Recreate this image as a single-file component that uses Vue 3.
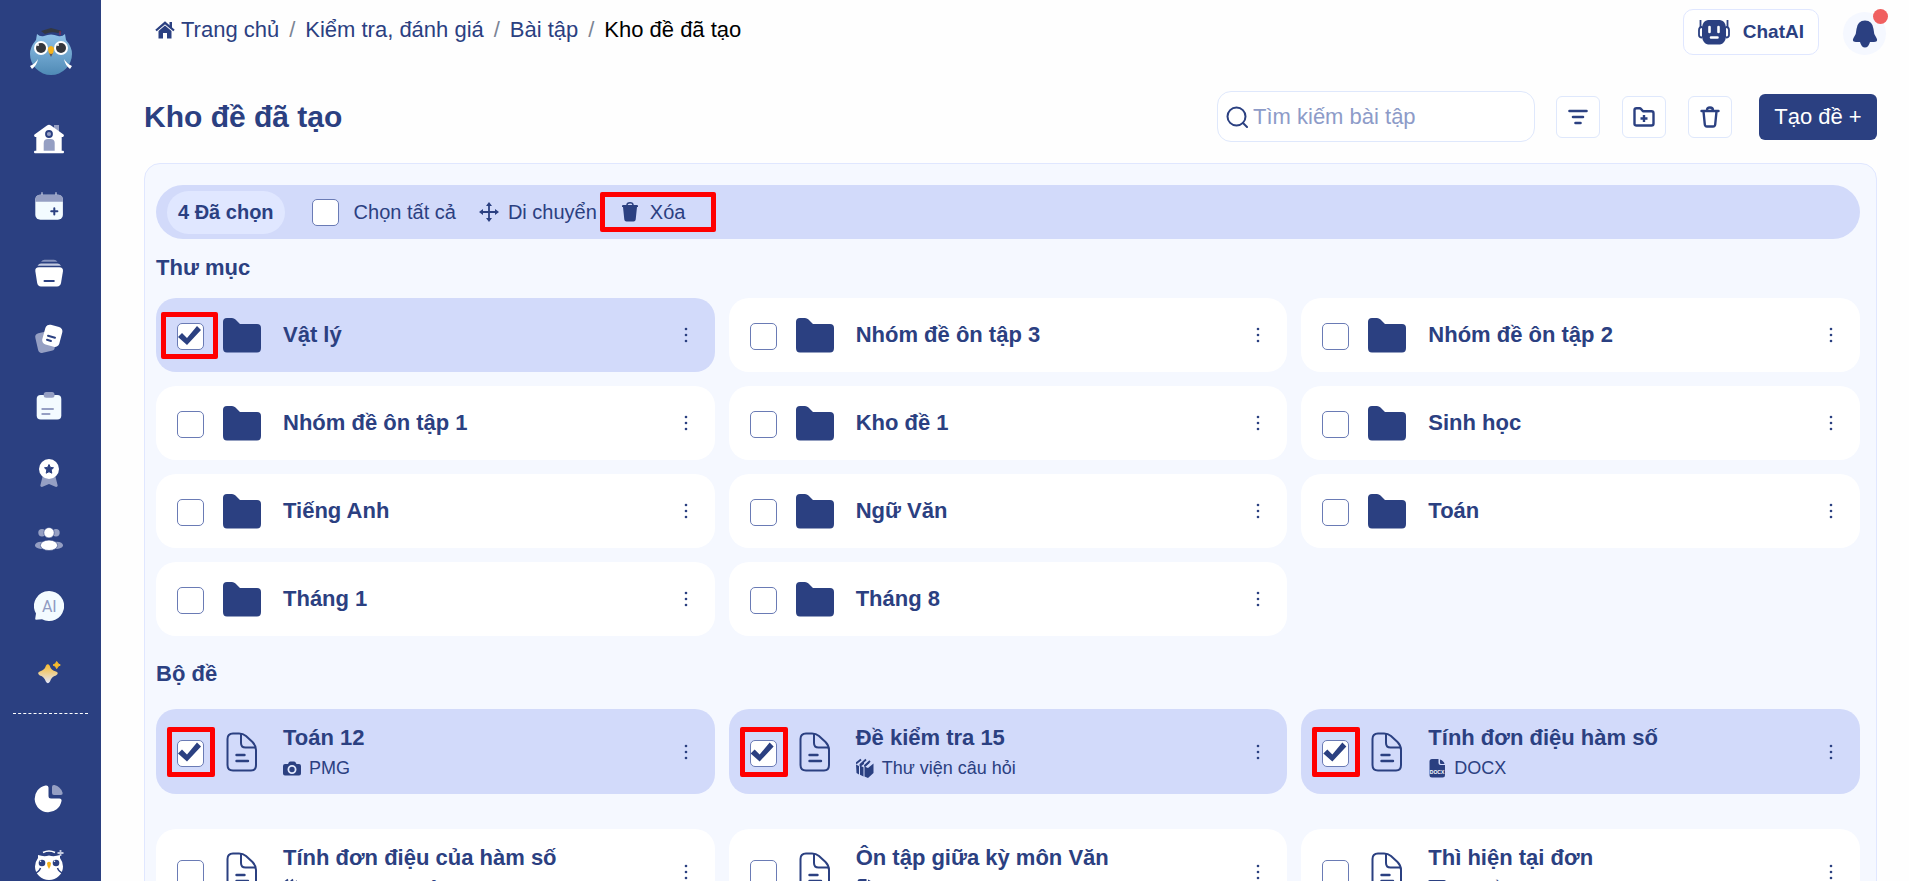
<template>
  <div class="app">
    <aside class="sidebar">
      <a href="#" class="logo" aria-label="Trang chủ">
        <svg width="44" height="48" viewBox="0 0 44 48">
          <defs>
            <linearGradient id="owl" x1="0" y1="0" x2="0" y2="1">
              <stop offset="0" stop-color="#8fc1e8" />
              <stop offset="1" stop-color="#4f8ab5" />
            </linearGradient>
          </defs>
          <path d="M8 6 Q11 9 15 8 Q22 5 29 8 Q33 9 36 6 L37 12 Q43 19 43 26 A21 21 0 0 1 1 26 Q1 19 7 12 Z" fill="url(#owl)" />
          <path d="M12 3 L22 0 L33 3 L29 5 Q22 3 16 6 Z" fill="#333842" />
          <path d="M31 3 V7" stroke="#a52a45" stroke-width="1" />
          <circle cx="12" cy="20" r="7" fill="#fff" />
          <circle cx="32" cy="20" r="7" fill="#fff" />
          <circle cx="12" cy="20" r="5" fill="#35373c" />
          <circle cx="32" cy="20" r="5" fill="#35373c" />
          <circle cx="9" cy="17" r="1" fill="#fff" />
          <circle cx="29" cy="17" r="1" fill="#fff" />
          <path d="M19 20 Q22 16 25 20 Q25 25 22 28 Q19 25 19 20" fill="#f5b31c" />
          <path d="M20 25 Q22 27 24 25 L22 29 Z" fill="#5a5560" />
          <path d="M9 31 Q8 37 3 41 L1 38 Q6 36 9 31 M35 31 Q36 37 41 41 L43 38 Q38 36 35 31" fill="#fff" />
        </svg>
      </a>

      <nav class="menu">
        <a v-for="item in menu" :key="item.icon" href="#" class="menu-item" :aria-label="item.label">
          <svg width="30" height="30" viewBox="0 0 30 30">
            <g v-if="item.icon === 'home'">
              <rect x="20" y="1" width="5" height="9" fill="#959fc3" />
              <path d="M13 1.5 Q15 0 17 1.5 L29.5 10.5 Q30.5 12 29 13 H27.7 V26.7 H29 Q30 26.7 30 28 Q30 29.3 29 29.3 H1 Q0 29.3 0 28 Q0 26.7 1 26.7 H2.3 V13 H1 Q-.5 12 .5 10.5 Z" fill="#fff" />
              <circle cx="15" cy="10" r="3" fill="#959fc3" stroke="#2b4081" stroke-width="1.8" />
              <path d="M9.7 26.7 V19 Q9.7 15 14 15 H16.5 Q20.7 15 20.7 19 V26.7 Z" fill="#959fc3" />
            </g>
            <g v-else-if="item.icon === 'calendar'">
              <path d="M8 1.8 V5 M22 1.8 V5" stroke="#959fc3" stroke-width="1.8" stroke-linecap="round" />
              <rect x="1.3" y="3.7" width="27.6" height="25" rx="5" fill="#f3fbff" />
              <path d="M1.3 10.7 V8.7 Q1.3 3.7 6.3 3.7 H24 Q28.9 3.7 28.9 8.7 V10.7 Z" fill="#959fc3" />
              <path d="M20.3 17.2 V23.4 M17.2 20.3 H23.4" stroke="#2b4081" stroke-width="2" stroke-linecap="round" />
            </g>
            <g v-else-if="item.icon === 'stack'">
              <path d="M7 3.7 Q8.5 1.7 10.5 1.7 H20 Q22 1.7 23.5 3.7 Z" fill="#8793bd" />
              <path d="M3.5 7.7 Q5 5.5 7 5.5 H23.5 Q25.5 5.5 27 7.7 Z" fill="#c3cae0" />
              <path d="M5 9.3 H25.5 Q29 9.3 29 13 L27 25 Q26.3 28.4 23 28.4 H7 Q3.8 28.4 3.2 25 L1.3 13 Q1 9.3 5 9.3" fill="#fff" />
              <path d="M10.5 23 H19.8" stroke="#2b4081" stroke-width="2" stroke-linecap="round" />
            </g>
            <g v-else-if="item.icon === 'cards'">
              <rect x="2.5" y="8" width="17" height="20" rx="4" fill="#959fc3" transform="rotate(-13 11 18)" />
              <rect x="9.5" y="1.5" width="17.5" height="20.5" rx="4.5" fill="#fff" transform="rotate(15 18 12)" />
              <path d="M14 11.8 L21 13.8 M13 15.8 L17 17" stroke="#2b4081" stroke-width="2" stroke-linecap="round" />
            </g>
            <g v-else-if="item.icon === 'clipboard'">
              <rect x="2.7" y="4" width="24.6" height="24.5" rx="4" fill="#f3fbff" />
              <rect x="9.7" y="1" width="10.8" height="5.7" rx="2.5" fill="#959fc3" />
              <path d="M8.3 18 H19 M8.3 23 H15.5" stroke="#959fc3" stroke-width="2" stroke-linecap="round" />
            </g>
            <g v-else-if="item.icon === 'badge'">
              <path d="M9 17 L6.3 27.5 Q6.5 29.3 8.5 28.8 L15 26 L21.5 28.8 Q23.5 29.3 23.7 27.5 L21 17 Z" fill="#959fc3" />
              <circle cx="15" cy="11" r="10" fill="#fff" />
              <path d="M15 6.5 L16.4 9.4 L19.5 9.8 L17.2 12 L17.8 15.2 L15 13.7 L12.2 15.2 L12.8 12 L10.5 9.8 L13.6 9.4 Z" fill="#2b4081" stroke="#2b4081" stroke-linejoin="round" />
            </g>
            <g v-else-if="item.icon === 'people'">
              <circle cx="8" cy="8.7" r="3.7" fill="#959fc3" />
              <circle cx="22" cy="8.7" r="3.7" fill="#959fc3" />
              <ellipse cx="7" cy="21.3" rx="6" ry="3.6" fill="#959fc3" />
              <ellipse cx="23" cy="21.3" rx="6" ry="3.6" fill="#959fc3" />
              <circle cx="15" cy="8.7" r="5.2" fill="#fff" stroke="#2b4081" stroke-width=".6" />
              <ellipse cx="15" cy="21.3" rx="8.6" ry="5.2" fill="#fff" stroke="#2b4081" stroke-width=".6" />
            </g>
            <g v-else-if="item.icon === 'ai'">
              <path d="M15 0 A15 15 0 1 1 8 28.2 Q5 28.2 2 28.8 Q1 28.6 1.3 27 L2 22.5 A15 15 0 0 1 15 0" fill="#f3fbff" />
              <text x="15.3" y="21" text-anchor="middle" class="ai-text">AI</text>
            </g>
            <g v-else-if="item.icon === 'sparkle'">
              <defs>
                <linearGradient id="spark" x1="0" y1="0" x2="0" y2="1">
                  <stop offset="0" stop-color="#f8bb2c" />
                  <stop offset="1" stop-color="#e2e6fb" />
                </linearGradient>
              </defs>
              <path d="M12 7.5 Q13.8 5 15.6 7.5 Q17 12.5 22 13.6 Q25.500 15.3 22 17.4 Q17.5 18.5 16 23.5 Q13.8 27 11.8 23.5 Q10.5 18.7 5.8 17.4 Q2.5 15.3 5.8 13.6 Q10.8 12 12 7.5" fill="url(#spark)" />
              <path d="M22.7 3.5 L24 5.7 L26.3 7 L24 8.3 L22.7 10.6 L21.4 8.3 L19 7 L21.4 5.7 Z" fill="#f8bb2c" stroke="#f8bb2c" stroke-linejoin="round" />
            </g>
          </svg>
        </a>
      </nav>

      <div class="menu-divider"></div>

      <nav class="menu-bottom">
        <a href="#" class="menu-item" aria-label="Thống kê">
          <svg width="30" height="30" viewBox="0 0 30 30">
            <path d="M11.5 2.5 Q14.3 2 14.5 4.5 V13 Q14.5 15.5 17 15.5 H25.5 Q28 15.5 27.5 18 A13.5 13.5 0 1 1 11.5 2.5" fill="#fff" />
            <path d="M18 4 Q18 1.5 20.5 2 Q26.5 3.5 28.5 9.5 Q29 12 26.5 12 H20 Q18 12 18 10 Z" fill="#959fc3" />
          </svg>
        </a>
        <a href="#" class="menu-item" aria-label="Trợ lý">
          <svg width="30" height="30" viewBox="0 0 30 30">
            <path d="M4 5 Q10 7 15 5.5 Q20 7 26 5 L26 8 Q29 12 29 16.5 A14 13.5 0 0 1 1 16.5 Q1 12 4 8 Z" fill="#fff" />
            <path d="M9 2.5 Q15 -.5 21 2.5" stroke="#fff" stroke-width="1.6" fill="none" />
            <circle cx="8" cy="13" r="3.3" fill="#2b4081" />
            <circle cx="22" cy="13" r="3.3" fill="#2b4081" />
            <circle cx="6.5" cy="11.3" r=".8" fill="#fff" />
            <circle cx="20.5" cy="11.3" r=".8" fill="#fff" />
            <path d="M13 13 Q15 10.5 17 13 Q17 16.5 15 19 Q13 16.5 13 13" fill="#f5b31c" />
            <path d="M1 23 Q5 22 6.5 18 M29 23 Q25 22 23.5 18" stroke="#2b4081" stroke-width="1.5" fill="none" />
            <path d="M26.5 0 V6 M23.5 3 H29.5" stroke="#c3cae0" stroke-width="1.8" />
          </svg>
        </a>
      </nav>
    </aside>

    <main class="main">
      <div class="topbar">
        <nav class="breadcrumb" aria-label="Breadcrumb">
          <a href="#" class="crumb-home">
            <svg width="20" height="18" viewBox="0 0 20 18">
              <path d="M1 9.5 L10 1.8 L19 9.5" fill="none" stroke="#2b4081" stroke-width="2.2" />
              <path d="M14.5 1 H17 V7.5 L14.5 5.3 Z M3.5 10 L10 4.6 L16.5 10 V17.5 H12 V12 H8 V17.5 H3.5 Z" fill="#2b4081" />
            </svg>
            Trang chủ</a>
          <span class="slash">/</span>
          <a href="#">Kiểm tra, đánh giá</a>
          <span class="slash">/</span>
          <a href="#">Bài tập</a>
          <span class="slash">/</span>
          <span class="current">Kho đề đã tạo</span>
        </nav>
        <div class="topbar-actions">
          <button type="button" class="chat-btn">
            <svg width="32" height="26" viewBox="0 0 32 26">
              <path d="M10 1 H22 Q27 1.5 28 8 V18 Q27 24.5 22 25.5 H10 Q5 24.5 4 18 V8 Q5 1.5 10 1" fill="#2b4081" />
              <path d="M2.5 1 V9 M29.5 1 V9" stroke="#2b4081" stroke-width="1.8" />
              <path d="M4 8 Q1 8 1 11 V16 Q1 18.5 4 18.5 M28 8 Q31 8 31 11 V16 Q31 18.5 28 18.5" stroke="#2b4081" stroke-width="1.8" fill="none" />
              <path d="M11.5 8 V13 M20.5 8 V13 M13 18.5 H19.5" stroke="#fff" stroke-width="2.6" stroke-linecap="round" />
            </svg>
            ChatAI
          </button>
          <button type="button" class="bell-btn" aria-label="Thông báo">
            <svg width="26" height="28" viewBox="0 0 26 28">
              <path d="M13 .5 Q20.5 .5 21.5 9 Q21.5 14 24.5 18 Q26.5 22 22 22 H18 Q16.5 27.5 13 27.5 Q9.5 27.5 8 22 H4 Q-.5 22 1.5 18 Q4.5 14 4.5 9 Q5.5 .5 13 .5" fill="#2b4081" />
            </svg>
            <span class="bell-dot"></span>
          </button>
        </div>
      </div>

      <header class="page-header">
        <h1>Kho đề đã tạo</h1>
        <label class="search">
          <svg width="22" height="22" viewBox="0 0 22 22">
            <circle cx="10.5" cy="10.5" r="9" fill="none" stroke="#2b4081" stroke-width="2" />
            <path d="M17 17 L21 21" stroke="#2b4081" stroke-width="2" stroke-linecap="round" />
          </svg>
          <input v-model="keyword" type="text" placeholder="Tìm kiếm bài tập" aria-label="Tìm kiếm bài tập">
        </label>
        <div class="tools">
          <button type="button" class="tool-btn" aria-label="Bộ lọc">
            <svg width="20" height="16" viewBox="0 0 20 16" fill="none" stroke="#2b4081" stroke-width="2.6" stroke-linecap="round">
              <path d="M1.500 2 H18.500 M5 8 H15 M7.5 14 H12.5" />
            </svg>
          </button>
          <button type="button" class="tool-btn" aria-label="Thêm thư mục">
            <svg width="22" height="20" viewBox="0 0 22 20" fill="none" stroke="#2b4081" stroke-width="2.4" stroke-linejoin="round">
              <path d="M1.5 17 V3 Q1.5 1.2 3.5 1.2 H6.5 Q7.5 1.2 8.3 2.2 L10 4.3 H18.5 Q20.5 4.3 20.5 6.3 V16.5 Q20.5 18.5 18.5 18.5 H3.5 Q1.5 18.5 1.5 17" />
              <path d="M11 8 V15 M7.5 11.5 H14.5" />
            </svg>
          </button>
          <button type="button" class="tool-btn" aria-label="Thùng rác">
            <svg width="20" height="22" viewBox="0 0 20 22" fill="none" stroke="#2b4081" stroke-width="2.4" stroke-linecap="round" stroke-linejoin="round">
              <path d="M1.5 5 H18.5 M7 4.5 Q7 1.5 10 1.5 Q13 1.5 13 4.5 M3.5 5.5 L4.8 18.5 Q5 20.5 7 20.5 H13 Q15 20.5 15.2 18.5 L16.5 5.5" />
            </svg>
          </button>
        </div>
        <button type="button" class="create-btn">Tạo đề +</button>
      </header>

      <section class="panel">
        <div class="bulk-bar">
          <span class="bulk-count">{{ selectedCount }} Đã chọn</span>
          <label class="select-all">
            <input v-model="allSelected" type="checkbox" class="checkbox">
            Chọn tất cả
          </label>
          <button type="button" class="bulk-btn">
            <svg width="20" height="20" viewBox="0 0 20 20">
              <path d="M10 3 V17 M3 10 H17" stroke="#2b4081" stroke-width="1.8" />
              <path d="M10 0 L13 4 H7 Z M10 20 L13 16 H7 Z M0 10 L4 7 V13 Z M20 10 L16 7 V13 Z" fill="#2b4081" />
            </svg>
            Di chuyển
          </button>
          <button type="button" class="bulk-btn delete">
            <svg width="16" height="20" viewBox="0 0 16 20">
              <path d="M5 3 Q5 .8 8 .8 Q11 .8 11 3" fill="none" stroke="#2b4081" stroke-width="1.5" />
              <path d="M1 3 H15 Q16 3 16 4.2 V5 H15 L13.7 17.5 Q13.5 19.5 11.5 19.5 H4.5 Q2.5 19.5 2.3 17.5 L1 5 H0 V4.2 Q0 3 1 3" fill="#2b4081" />
            </svg>
            Xóa
          </button>
        </div>

        <h2>Thư mục</h2>
        <div class="grid folders">
          <article v-for="folder in folders" :key="folder.name" class="card folder-card" :class="{ selected: folder.checked }">
            <label class="check">
              <input v-model="folder.checked" type="checkbox" class="checkbox" :aria-label="folder.name">
            </label>
            <svg class="folder-icon" width="40" height="36" viewBox="0 0 40 36">
              <path d="M1 5 Q1 1 5 1 H10 Q12 1 13.5 2.5 L18 7 H35 Q39 7 39 11 V31 Q39 35.5 35 35.5 H5 Q1 35.5 1 31 Z" fill="#2b4081" />
            </svg>
            <h3>{{ folder.name }}</h3>
            <button type="button" class="more" aria-label="Tùy chọn">
              <svg width="4" height="16" viewBox="0 0 4 16" fill="#2b4081">
                <circle cx="2" cy="2" r="1.3" /><circle cx="2" cy="8" r="1.3" /><circle cx="2" cy="14" r="1.3" />
              </svg>
            </button>
          </article>
        </div>

        <h2 class="sets-title">Bộ đề</h2>
        <div class="grid sets">
          <article v-for="set in sets" :key="set.name" class="card set-card" :class="{ selected: set.checked }">
            <label class="check">
              <input v-model="set.checked" type="checkbox" class="checkbox" :aria-label="set.name">
            </label>
            <svg class="doc-icon" width="32" height="40" viewBox="0 0 32 40" fill="none" stroke="#2b4081" stroke-width="2" stroke-linecap="round">
              <path d="M7 1.5 H13 Q17 1.5 20 4 L26.5 10 Q30 13.5 30 18 V33 Q30 38.5 25 38.5 H7 Q1.5 38.5 1.5 33 V7 Q1.5 1.5 7 1.5" />
              <path d="M15 2 V11 Q15 15.5 19.5 15.5 H29" />
              <path d="M10.5 23 H18.5 M10.5 29 H22" stroke-width="2.4" />
            </svg>
            <div class="set-info">
              <h3>{{ set.name }}</h3>
              <p>
                <svg v-if="set.type === 'image'" width="18" height="18" viewBox="0 0 18 18">
                  <path d="M2 5 H5 L6 3 Q6.5 2.5 7.5 2.5 H11 Q12 2.5 12.3 3 L13.5 5 H16 Q18 5 18 7 V14.5 Q18 16.5 16 16.5 H2 Q0 16.5 0 14.5 V7 Q0 5 2 5" fill="#2b4081" />
                  <circle cx="9" cy="10.5" r="3.6" fill="#2b4081" stroke="#e3e9fd" stroke-width="1.8" />
                </svg>
                <svg v-else-if="set.type === 'library'" width="18" height="20" viewBox="0 0 18 20">
                  <path d="M0 5.5 L5 1.5 M4 7 L10 1.5 M8.5 8 L14 3" stroke="#2b4081" stroke-width="1.8" />
                  <path d="M0 6.500 L3 8 V16.500 L.5 15 Z M4 7.500 L7.500 9.200 V18.500 L4 16.800 Z M8.500 8.500 L12 10 L17.500 5.500 V15 L12 20 L8.500 18.500 Z" fill="#2b4081" />
                  <path d="M3.500 7 L8 3.500 V6 L4 9 Z M8 8 L12.500 4 L13.500 5 L9 9 Z" fill="#2b4081" />
                </svg>
                <svg v-else-if="set.type === 'docx'" width="18" height="20" viewBox="0 0 18 20">
                  <path d="M4 1 H10.5 V5 Q10.5 7 12.5 7 H17 V17 Q17 19.5 14.5 19.5 H4 Q1.5 19.5 1.5 17 V3.5 Q1.5 1 4 1 M12 1.5 Q16 3 16.5 6 H13 Q12 6 12 5 Z" fill="#2b4081" />
                  <text x="9" y="16" text-anchor="middle" class="docx-text">DOCX</text>
                </svg>
                <svg v-else width="18" height="18" viewBox="0 0 18 18">
                  <rect x="0" y="1" width="18" height="15" rx="2" fill="#2b4081" />
                  <path d="M4 6 H14 M4 10 H11" stroke="#fff" stroke-width="1.5" />
                </svg>
                {{ set.source }}
              </p>
            </div>
            <button type="button" class="more" aria-label="Tùy chọn">
              <svg width="4" height="16" viewBox="0 0 4 16" fill="#2b4081">
                <circle cx="2" cy="2" r="1.3" /><circle cx="2" cy="8" r="1.3" /><circle cx="2" cy="14" r="1.3" />
              </svg>
            </button>
          </article>
        </div>
      </section>
    </main>
  </div>
</template>

<script setup>
import { ref, computed } from 'vue'

const keyword = ref('')
const allSelected = ref(false)

const menu = [
  { icon: 'home', label: 'Trang chủ' },
  { icon: 'calendar', label: 'Lịch' },
  { icon: 'stack', label: 'Kho học liệu' },
  { icon: 'cards', label: 'Thẻ ghi nhớ' },
  { icon: 'clipboard', label: 'Bài tập' },
  { icon: 'badge', label: 'Thành tích' },
  { icon: 'people', label: 'Lớp học' },
  { icon: 'ai', label: 'ChatAI' },
  { icon: 'sparkle', label: 'Nâng cấp' }
]

const folders = ref([
  { name: 'Vật lý', checked: true },
  { name: 'Nhóm đề ôn tập 3', checked: false },
  { name: 'Nhóm đề ôn tập 2', checked: false },
  { name: 'Nhóm đề ôn tập 1', checked: false },
  { name: 'Kho đề 1', checked: false },
  { name: 'Sinh học', checked: false },
  { name: 'Tiếng Anh', checked: false },
  { name: 'Ngữ Văn', checked: false },
  { name: 'Toán', checked: false },
  { name: 'Tháng 1', checked: false },
  { name: 'Tháng 8', checked: false }
])

const sets = ref([
  { name: 'Toán 12', type: 'image', source: 'PMG', checked: true },
  { name: 'Đề kiểm tra 15', type: 'library', source: 'Thư viện câu hỏi', checked: true },
  { name: 'Tính đơn điệu hàm số', type: 'docx', source: 'DOCX', checked: true },
  { name: 'Tính đơn điệu của hàm số', type: 'library', source: 'Thư viện câu hỏi', checked: false },
  { name: 'Ôn tập giữa kỳ môn Văn', type: 'docx', source: 'DOCX', checked: false },
  { name: 'Thì hiện tại đơn', type: 'topic', source: 'Bài đề', checked: false }
])

const selectedCount = computed(() => {
  return [...folders.value, ...sets.value].filter((item) => item.checked).length
})
</script>

<style>
body {
  margin: 0;
  background: #fefefe;
}
</style>

<style scoped>
.app {
  display: flex;
  height: 100vh;
  overflow: hidden;
  font-family: "Liberation Sans", Arial, sans-serif;
  font-size: 22px;
  color: #2b4081;
}

.app *,
.app *::before,
.app *::after {
  box-sizing: border-box;
}

a {
  color: inherit;
  text-decoration: none;
}

svg {
  display: block;
  flex-shrink: 0;
}

button {
  font: inherit;
  color: inherit;
  background: transparent;
  border: none;
  padding: 0;
  cursor: pointer;
}

h1,
h2,
h3,
p {
  margin: 0;
}

/* Sidebar */
.sidebar {
  width: 101px;
  flex-shrink: 0;
  background: #2b4081;
  display: flex;
  flex-direction: column;
  overflow: hidden;
}

.logo {
  display: flex;
  justify-content: center;
  padding: 28px 0 30px;
  flex-shrink: 0;
}

.menu,
.menu-bottom {
  display: flex;
  flex-direction: column;
  flex-shrink: 0;
  padding-right: 3px;
}

.menu {
  height: 600px;
}

.menu-bottom {
  height: 133px;
  margin-top: 51px;
}

.menu-item {
  flex: 1;
  display: flex;
  align-items: center;
  justify-content: center;
}

.menu-divider {
  margin: 7px 13px 0;
  border-top: 1px dashed #fff;
}

.ai-text {
  font-family: Roboto, sans-serif;
  font-size: 16px;
  fill: #8f9ac2;
}

/* Top bar */
.main {
  flex: 1;
  min-width: 0;
  padding: 9px 32px 0 43px;
  overflow: auto;
  scrollbar-width: none;
}

.topbar {
  display: flex;
  justify-content: space-between;
  height: 46px;
}

.breadcrumb {
  display: flex;
  align-items: flex-start;
  padding-left: 11px;
  line-height: 42px;
}

.crumb-home {
  display: flex;
  align-items: center;
  gap: 6px;
}

.slash {
  width: 26px;
  text-align: center;
  color: #7b8494;
}

.current {
  color: #000;
}

.topbar-actions {
  display: flex;
  gap: 24px;
  margin-right: -9px;
}

.chat-btn {
  display: flex;
  align-items: center;
  gap: 13px;
  height: 46px;
  padding: 0 14px;
  background: #fff;
  border: 1px solid #e0e7ff;
  border-radius: 10px;
  font-size: 19px;
  font-weight: 700;
}

.bell-btn {
  position: relative;
  display: flex;
  align-items: center;
  justify-content: center;
  width: 43px;
  height: 43px;
  margin-top: 3px;
  border-radius: 50%;
  background: #f5f8ff;
}

.bell-dot {
  position: absolute;
  top: -3px;
  right: -2px;
  width: 15px;
  height: 15px;
  border-radius: 50%;
  background: #f06060;
}

/* Page header */
.page-header {
  display: flex;
  align-items: center;
  margin-top: 36px;
  margin-bottom: 21px;
}

h1 {
  font-size: 30px;
  line-height: 36px;
}

.search {
  display: flex;
  align-items: center;
  gap: 5px;
  width: 318px;
  height: 51px;
  margin-left: auto;
  padding: 0 8px;
  background: #fff;
  border: 1px solid #dfe8fc;
  border-radius: 14px;
}

.search input {
  flex: 1;
  min-width: 0;
  padding: 0;
  border: none;
  outline: none;
  background: transparent;
  font: inherit;
  color: inherit;
}

.search input::placeholder {
  color: #8d9bc8;
  opacity: 1;
}

.tools {
  display: flex;
  gap: 22px;
  margin: 0 27px 0 21px;
}

.tool-btn {
  display: flex;
  align-items: center;
  justify-content: center;
  width: 44px;
  height: 42px;
  background: #fff;
  border: 1px solid #dfe8fc;
  border-radius: 6px;
}

.create-btn {
  width: 118px;
  height: 46px;
  border-radius: 6px;
  background: #2b4081;
  color: #fff;
}

/* Panel */
.panel {
  padding: 21px 16px 16px 11px;
  background: #f5f8ff;
  border: 1px solid #e0e7ff;
  border-radius: 16px;
}

.bulk-bar {
  display: flex;
  align-items: center;
  height: 54px;
  padding-left: 11px;
  border-radius: 27px;
  background: #d2dafa;
  font-size: 20px;
}

.bulk-count {
  height: 43px;
  padding: 0 11px;
  border-radius: 22px;
  background: #e0e7ff;
  font-weight: 700;
  line-height: 43px;
}

.select-all {
  display: flex;
  align-items: center;
  gap: 15px;
  margin: 0 23px 0 27px;
}

.bulk-btn {
  display: flex;
  align-items: center;
  gap: 9px;
}

.bulk-btn.delete {
  gap: 12px;
  width: 116px;
  height: 40px;
  margin-left: 3px;
  padding-left: 17px;
  border: 5px solid #f00;
  border-radius: 2px;
}

h2 {
  margin: 16px 0 17px;
  font-size: 22px;
  line-height: 26px;
}

.sets-title {
  margin: 25px 0 22px;
}

h3 {
  font-size: 22px;
  line-height: 26px;
}

.grid {
  display: grid;
  grid-template-columns: repeat(3, 1fr);
  column-gap: 14px;
}

.folders {
  row-gap: 14px;
}

.sets {
  row-gap: 35px;
}

.card {
  display: flex;
  align-items: center;
  padding: 0 19px 0 21px;
  background: #fff;
  border-radius: 20px;
}

.card.selected {
  background: #d2dafa;
}

.folder-card {
  height: 74px;
}

.set-card {
  height: 85px;
}

.check {
  position: relative;
  display: flex;
  padding-top: 3px;
}

.checkbox {
  appearance: none;
  width: 27px;
  height: 27px;
  margin: 0;
  background: #fff;
  border: 1px solid #6a7bb5;
  border-radius: 5px;
  cursor: pointer;
}

.checkbox:checked::before {
  content: "";
  display: block;
  width: 25px;
  height: 25px;
  background: #2b4081;
  clip-path: polygon(0 13px, 4px 9px, 9px 14px, 19px 2px, 23px 6px, 9px 21px);
}

/* Red frame around a ticked box */
.selected .check::after {
  content: "";
  position: absolute;
  top: -8px;
  left: -16px;
  width: 57px;
  height: 47px;
  border: 5px solid #f00;
  border-radius: 2px;
  pointer-events: none;
}

.set-card.selected .check::after {
  top: -10px;
  left: -10px;
  width: 48px;
  height: 50px;
}

.folder-icon {
  margin: 0 21px 0 18px;
}

.doc-icon {
  margin: 0 25px 0 22px;
}

.set-info p {
  display: flex;
  align-items: center;
  gap: 8px;
  margin-top: 6px;
  font-size: 18px;
  line-height: 22px;
}

.docx-text {
  font-size: 5px;
  font-weight: 700;
  fill: #fff;
}

.more {
  display: flex;
  align-items: center;
  justify-content: center;
  width: 20px;
  height: 32px;
  margin-left: auto;
}
</style>
